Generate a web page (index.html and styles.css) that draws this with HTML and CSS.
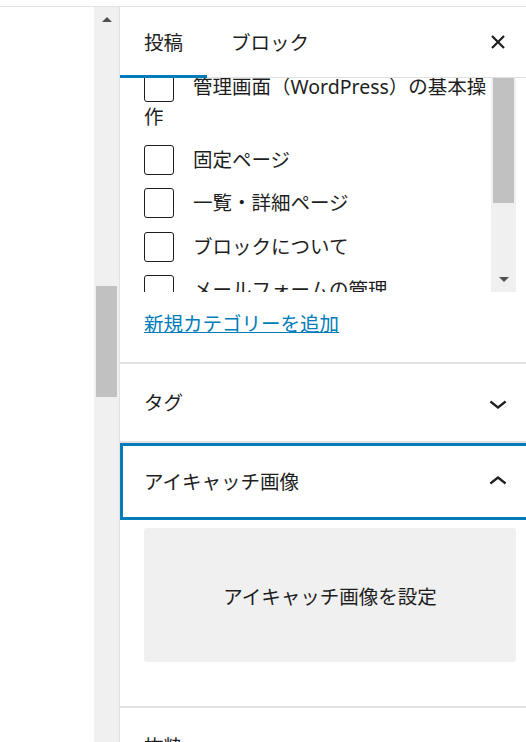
FILE: index.html
```html
<!DOCTYPE html>
<html lang="ja">
<head>
<meta charset="utf-8">
<title>投稿設定</title>
<link rel="stylesheet" href="styles.css">
</head>
<body>
<div class="topline"></div>
<div class="main">
  <div class="canvas"></div>
  <div class="vscroll">
    <div class="sb-btn"><span class="tri-up"></span></div>
    <div class="sb-thumb page-thumb"></div>
  </div>
  <aside class="sidebar">
    <div class="sb-header">
      <div class="tabs">
        <button class="tab active">投稿</button>
        <button class="tab">ブロック</button>
      </div>
      <button class="close" aria-label="閉じる">
        <svg width="36" height="36" viewBox="0 0 36 36"><path d="M12 12L24 24M24 12L12 24" stroke="#1e1e1e" stroke-width="2.2" fill="none"/></svg>
      </button>
    </div>
    <div class="sb-body">
      <div class="panel cats">
        <div class="cat-box">
          <ul class="cat-list">
            <li><span class="cb"></span>管理画面（WordPress）の基本操作</li>
            <li><span class="cb"></span>固定ページ</li>
            <li><span class="cb"></span>一覧・詳細ページ</li>
            <li><span class="cb"></span>ブロックについて</li>
            <li><span class="cb"></span>メールフォームの管理</li>
          </ul>
          <div class="cat-scroll">
            <div class="sb-thumb cat-thumb"></div>
            <div class="sb-btn down"><span class="tri-down"></span></div>
          </div>
        </div>
        <div class="add-wrap"><a class="add-cat" href="#">新規カテゴリーを追加</a></div>
      </div>
      <div class="panel">
        <button class="panel-toggle"><span>タグ</span>
          <svg width="36" height="36" viewBox="0 0 24 24"><path d="M17.5 11.6L12 16l-5.5-4.4.9-1.2L12 14l4.6-3.6 1 1.2z" fill="#1e1e1e"/></svg>
        </button>
      </div>
      <div class="panel">
        <button class="panel-toggle focus"><span>アイキャッチ画像</span>
          <svg width="36" height="36" viewBox="0 0 24 24"><path d="M6.5 12.4L12 8l5.5 4.4-.9 1.2L12 10l-4.6 3.6-1-1.2z" fill="#1e1e1e"/></svg>
        </button>
        <div class="panel-body">
          <button class="featured">アイキャッチ画像を設定</button>
        </div>
      </div>
      <div class="panel">
        <button class="panel-toggle"><span>抜粋</span>
          <svg width="36" height="36" viewBox="0 0 24 24"><path d="M17.5 11.6L12 16l-5.5-4.4.9-1.2L12 14l4.6-3.6 1 1.2z" fill="#1e1e1e"/></svg>
        </button>
      </div>
    </div>
  </aside>
</div>
</body>
</html>
```

FILE: styles.css
```css
html, body {
  margin: 0;
  padding: 0;
  overflow: hidden;
  background: #fff;
}
body {
  font-family: "Noto Sans", "Noto Sans CJK JP", sans-serif;
  font-size: 19.5px;
  color: #1e1e1e;
  width: 526px;
  height: 742px;
}
button {
  font-family: inherit;
  font-size: inherit;
  color: inherit;
  background: none;
  border: none;
  padding: 0;
  margin: 0;
  cursor: pointer;
}
.topline {
  height: 6px;
  border-bottom: 1px solid #e2e2e2;
}
.main {
  display: flex;
  height: 735px;
  overflow: hidden;
}
.canvas {
  width: 94px;
  flex-shrink: 0;
  background: #fff;
}
.vscroll {
  width: 25px;
  flex-shrink: 0;
  background: #f0f0f0;
  display: flex;
  flex-direction: column;
}
.sb-btn {
  height: 25px;
  display: flex;
  align-items: center;
  justify-content: center;
}
.tri-up {
  width: 0;
  height: 0;
  border-left: 5px solid transparent;
  border-right: 5px solid transparent;
  border-bottom: 5px solid #505050;
}
.tri-down {
  width: 0;
  height: 0;
  border-left: 5px solid transparent;
  border-right: 5px solid transparent;
  border-top: 5px solid #505050;
}
.sb-thumb {
  background: #c1c1c1;
  margin: 0 2px;
}
.page-thumb {
  margin-top: 254px;
  height: 111px;
}
.sidebar {
  width: 420px;
  flex-shrink: 0;
  border-left: 1px solid #e0e0e0;
  display: flex;
  flex-direction: column;
}
.sb-header {
  height: 71px;
  box-sizing: border-box;
  border-bottom: 1px solid #e0e0e0;
  display: flex;
  align-items: center;
  justify-content: space-between;
  flex-shrink: 0;
}
.tabs {
  display: flex;
  height: 100%;
}
.tab {
  position: relative;
  height: 70px;
  padding: 0 24px;
  line-height: 29px;
}
.tab.active::after {
  content: "";
  position: absolute;
  left: 0;
  right: 0;
  bottom: -1px;
  height: 3px;
  background: #007cba;
}
.close {
  width: 36px;
  height: 36px;
  margin-right: 24px;
  display: flex;
}
.sb-body {
  flex: 1;
  overflow: hidden;
}
.panel {
  border-top: 2px solid #e2e2e2;
}
.panel.cats {
  border-top: none;
  padding: 0 24px 24.5px;
}
.cat-box {
  height: 214px;
  display: flex;
}
.cat-list {
  flex: 1;
  list-style: none;
  margin: 0;
  padding: 0;
  overflow: hidden;
  line-height: 29px;
}
.cat-list li {
  margin-bottom: 13.5px;
}
.cat-list li:first-child {
  margin-top: -6px;
}
.cb {
  display: inline-block;
  width: 30px;
  height: 30px;
  box-sizing: border-box;
  border: 1px solid #1e1e1e;
  border-radius: 3px;
  margin-right: 19px;
  vertical-align: top;
}
.cat-scroll {
  width: 25px;
  flex-shrink: 0;
  background: #f0f0f0;
  display: flex;
  flex-direction: column;
  justify-content: space-between;
}
.cat-thumb {
  height: 125px;
}
.add-wrap {
  margin-top: 16.5px;
  line-height: 29px;
}
.add-cat {
  color: #007cba;
  text-decoration: underline;
}
.panel-toggle {
  width: 100%;
  height: 77px;
  padding: 0 24px;
  box-sizing: border-box;
  display: flex;
  align-items: center;
  justify-content: space-between;
  text-align: left;
  line-height: 29px;
}
.panel-toggle svg {
  display: block;
}
.panel-toggle.focus {
  box-shadow: inset 0 0 0 3px #007cba;
}
.panel-body {
  padding: 8px 24px 44px;
}
.featured {
  display: flex;
  align-items: center;
  justify-content: center;
  width: 100%;
  height: 134px;
  background: #f0f0f0;
  border-radius: 3px;
}
```
